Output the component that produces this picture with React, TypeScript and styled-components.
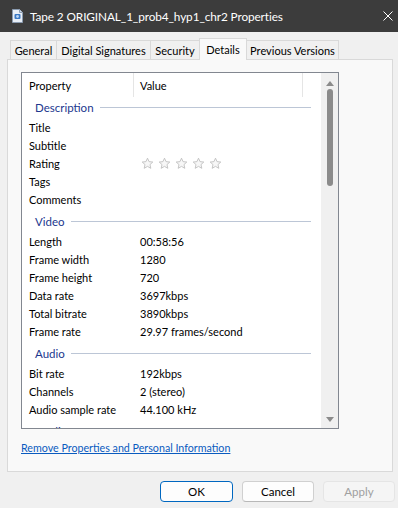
import React from "react";
import styled, { createGlobalStyle } from "styled-components";

const GlobalStyle = createGlobalStyle`
  html, body { margin: 0; padding: 0; background: #f0f0f0; }
  body { font-family: Lato, "Noto Sans", sans-serif; -webkit-font-smoothing: antialiased; }
  * { box-sizing: border-box; }
`;

const Window = styled.div`
  width: 398px;
  height: 508px;
  display: flex;
  flex-direction: column;
  background: #f0f0f0;
  overflow: hidden;
`;

const TitleBar = styled.div`
  height: 32px;
  flex: none;
  display: flex;
  align-items: center;
  background: #3c3c3c;
  color: #ffffff;
  padding: 0 5px 0 12px;
`;

const TitleText = styled.div`
  margin-left: 7px;
  font-size: 11.8px;
  letter-spacing: -0.1px;
  flex: 1;
  white-space: nowrap;
`;

const CloseButton = styled.div`
  width: 10px;
  height: 10px;
  display: flex;
  align-items: center;
  justify-content: center;
`;

const Body = styled.div`
  flex: 1;
  display: flex;
  flex-direction: column;
  padding: 6px 5px 0 7px;
`;

const TabRow = styled.div`
  height: 21px;
  display: flex;
  align-items: flex-end;
  padding-left: 3px;
  position: relative;
  z-index: 1;
`;

const Tab = styled.div<{ $w: number; $active?: boolean }>`
  width: ${(p) => p.$w}px;
  height: ${(p) => (p.$active ? 22 : 19)}px;
  margin-bottom: ${(p) => (p.$active ? -1 : 0)}px;
  margin-left: -1px;
  border: 1px solid #d9d9d9;
  border-bottom: none;
  background: ${(p) => (p.$active ? "#f9f9f9" : "#f0f0f0")};
  font-size: 11px;
  color: #000;
  display: flex;
  justify-content: center;
  align-items: ${(p) => (p.$active ? "flex-start" : "center")};
  padding-top: ${(p) => (p.$active ? 4 : 0)}px;
  white-space: nowrap;
  &:first-child { margin-left: 0; }
`;

const Panel = styled.div`
  height: 413px;
  background: #f9f9f9;
  border: 1px solid #d9d9d9;
  padding: 12px 0 0 13px;
  display: flex;
  flex-direction: column;
`;

const ListBox = styled.div`
  width: 318px;
  height: 357px;
  border: 1px solid #828790;
  background: #ffffff;
  display: flex;
`;

const ListContent = styled.div`
  flex: 1;
  overflow: hidden;
  font-size: 11px;
  color: #000;
`;

const HeaderRow = styled.div`
  height: 24px;
  display: flex;
`;

const HeaderCell = styled.div<{ $w: number; $pad: number }>`
  width: ${(p) => p.$w}px;
  padding-left: ${(p) => p.$pad}px;
  padding-top: 1px;
  border-right: 1px solid #e5e5e5;
  display: flex;
  align-items: center;
`;

const GroupHeader = styled.div<{ $first?: boolean }>`
  height: ${(p) => (p.$first ? 21 : 24)}px;
  padding-top: ${(p) => (p.$first ? 0 : 3)}px;
  padding-left: 13px;
  padding-right: 10px;
  display: flex;
  align-items: center;
  gap: 6px;
  color: #21378e;
  font-size: 11.5px;
`;

const GroupLine = styled.div`
  flex: 1;
  height: 1px;
  background: #bcc6d6;
`;

const ItemRow = styled.div`
  height: 18px;
  display: grid;
  grid-template-columns: 118px 1fr;
  align-items: center;
  white-space: nowrap;
`;

const PropName = styled.div`
  padding-left: 7px;
`;

const PropValue = styled.div`
  display: flex;
  align-items: center;
`;

const Stars = styled.div`
  display: flex;
  gap: 4px;
  margin-left: 1px;
`;

const Scrollbar = styled.div`
  width: 17px;
  flex: none;
  background: #f0f0f0;
  display: flex;
  flex-direction: column;
  align-items: center;
  padding: 8px 0 6px;
`;

const Thumb = styled.div`
  width: 6px;
  height: 97px;
  margin-top: 3px;
  border-radius: 3px;
  background: #8b8b8b;
`;

const Spacer = styled.div`
  flex: 1;
`;

const Link = styled.a`
  margin-top: 12px;
  font-size: 10.7px;
  line-height: 14px;
  color: #0a5bbf;
  text-decoration: underline;
  cursor: pointer;
  align-self: flex-start;
`;

const ButtonRow = styled.div`
  display: flex;
  justify-content: flex-end;
  gap: 9px;
  margin-top: 9px;
  margin-right: -2px;
`;

const Button = styled.button<{ $variant?: "primary" | "disabled"; $w?: number }>`
  width: ${(p) => p.$w ?? 72}px;
  height: 21px;
  border-radius: 4px;
  font-family: Lato, "Noto Sans", sans-serif;
  font-size: 11.5px;
  padding: 0;
  background: ${(p) => (p.$variant === "disabled" ? "#f5f5f5" : "#fdfdfd")};
  color: ${(p) => (p.$variant === "disabled" ? "#a0a0a0" : "#000")};
  border: 1px solid
    ${(p) =>
      p.$variant === "primary"
        ? "#0067c0"
        : p.$variant === "disabled"
        ? "#e5e5e5"
        : "#d0d0d0"};
  border-bottom-color: ${(p) =>
    p.$variant === "primary" ? "#0067c0" : p.$variant === "disabled" ? "#e5e5e5" : "#b8b8b8"};
`;

const FileIcon = () => (
  <svg width="11" height="14" viewBox="0 0 11 14">
    <path d="M0.5 0.5 H7.5 L10.5 3.5 V13.5 H0.5 Z" fill="#e8eef6" stroke="#8a9bb0" />
    <path d="M7.5 0.5 V3.5 H10.5" fill="#c9d6e6" stroke="#8a9bb0" />
    <rect x="2.5" y="5" width="6" height="5" rx="1" fill="#3b78c4" />
    <circle cx="5.5" cy="7.5" r="1.4" fill="#bcd7f5" />
  </svg>
);

const CloseIcon = () => (
  <svg width="10" height="10" viewBox="0 0 10 10">
    <path d="M0.5 0.5 L9.5 9.5 M9.5 0.5 L0.5 9.5" stroke="#ffffff" strokeWidth="1" />
  </svg>
);

const Star = () => (
  <svg width="13" height="13" viewBox="0 0 24 24">
    <path
      d="M12 2.2 L14.9 8.6 L21.8 9.3 L16.6 14 L18.1 20.9 L12 17.3 L5.9 20.9 L7.4 14 L2.2 9.3 L9.1 8.6 Z"
      fill="#f7f7f7"
      stroke="#bdbdbd"
      strokeWidth="1.6"
      strokeLinejoin="round"
    />
  </svg>
);

const ArrowUp = () => (
  <svg width="8" height="5" viewBox="0 0 8 5">
    <path d="M4 0 L8 5 H0 Z" fill="#8b8b8b" />
  </svg>
);

const ArrowDown = () => (
  <svg width="8" height="5" viewBox="0 0 8 5">
    <path d="M0 0 H8 L4 5 Z" fill="#8b8b8b" />
  </svg>
);

type Item = [string, React.ReactNode];
type Group = { name: string; items: Item[] };

const stars = (
  <Stars>
    {[0, 1, 2, 3, 4].map((i) => (
      <Star key={i} />
    ))}
  </Stars>
);

const groups: Group[] = [
  {
    name: "Description",
    items: [
      ["Title", ""],
      ["Subtitle", ""],
      ["Rating", stars],
      ["Tags", ""],
      ["Comments", ""],
    ],
  },
  {
    name: "Video",
    items: [
      ["Length", "00:58:56"],
      ["Frame width", "1280"],
      ["Frame height", "720"],
      ["Data rate", "3697kbps"],
      ["Total bitrate", "3890kbps"],
      ["Frame rate", "29.97 frames/second"],
    ],
  },
  {
    name: "Audio",
    items: [
      ["Bit rate", "192kbps"],
      ["Channels", "2 (stereo)"],
      ["Audio sample rate", "44.100 kHz"],
    ],
  },
  {
    name: "Media",
    items: [],
  },
];

const tabs: { label: string; w: number; active?: boolean }[] = [
  { label: "General", w: 47 },
  { label: "Digital Signatures", w: 95 },
  { label: "Security", w: 50 },
  { label: "Details", w: 48, active: true },
  { label: "Previous Versions", w: 93 },
];

export default function App() {
  return (
    <Window>
      <GlobalStyle />
      <TitleBar>
        <FileIcon />
        <TitleText>Tape 2 ORIGINAL_1_prob4_hyp1_chr2 Properties</TitleText>
        <CloseButton>
          <CloseIcon />
        </CloseButton>
      </TitleBar>
      <Body>
        <TabRow>
          {tabs.map((t) => (
            <Tab key={t.label} $w={t.w} $active={t.active}>
              {t.label}
            </Tab>
          ))}
        </TabRow>
        <Panel>
          <ListBox>
            <ListContent>
              <HeaderRow>
                <HeaderCell $w={112} $pad={7}>Property</HeaderCell>
                <HeaderCell $w={169} $pad={6}>Value</HeaderCell>
              </HeaderRow>
              {groups.map((g, gi) => (
                <React.Fragment key={g.name}>
                  <GroupHeader $first={gi === 0}>
                    {g.name}
                    <GroupLine />
                  </GroupHeader>
                  {g.items.map(([k, v]) => (
                    <ItemRow key={k}>
                      <PropName>{k}</PropName>
                      <PropValue>{v}</PropValue>
                    </ItemRow>
                  ))}
                </React.Fragment>
              ))}
            </ListContent>
            <Scrollbar>
              <ArrowUp />
              <Thumb />
              <Spacer />
              <ArrowDown />
            </Scrollbar>
          </ListBox>
          <Link>Remove Properties and Personal Information</Link>
        </Panel>
        <ButtonRow>
          <Button $variant="primary" $w={73}>OK</Button>
          <Button>Cancel</Button>
          <Button $variant="disabled">Apply</Button>
        </ButtonRow>
      </Body>
    </Window>
  );
}
